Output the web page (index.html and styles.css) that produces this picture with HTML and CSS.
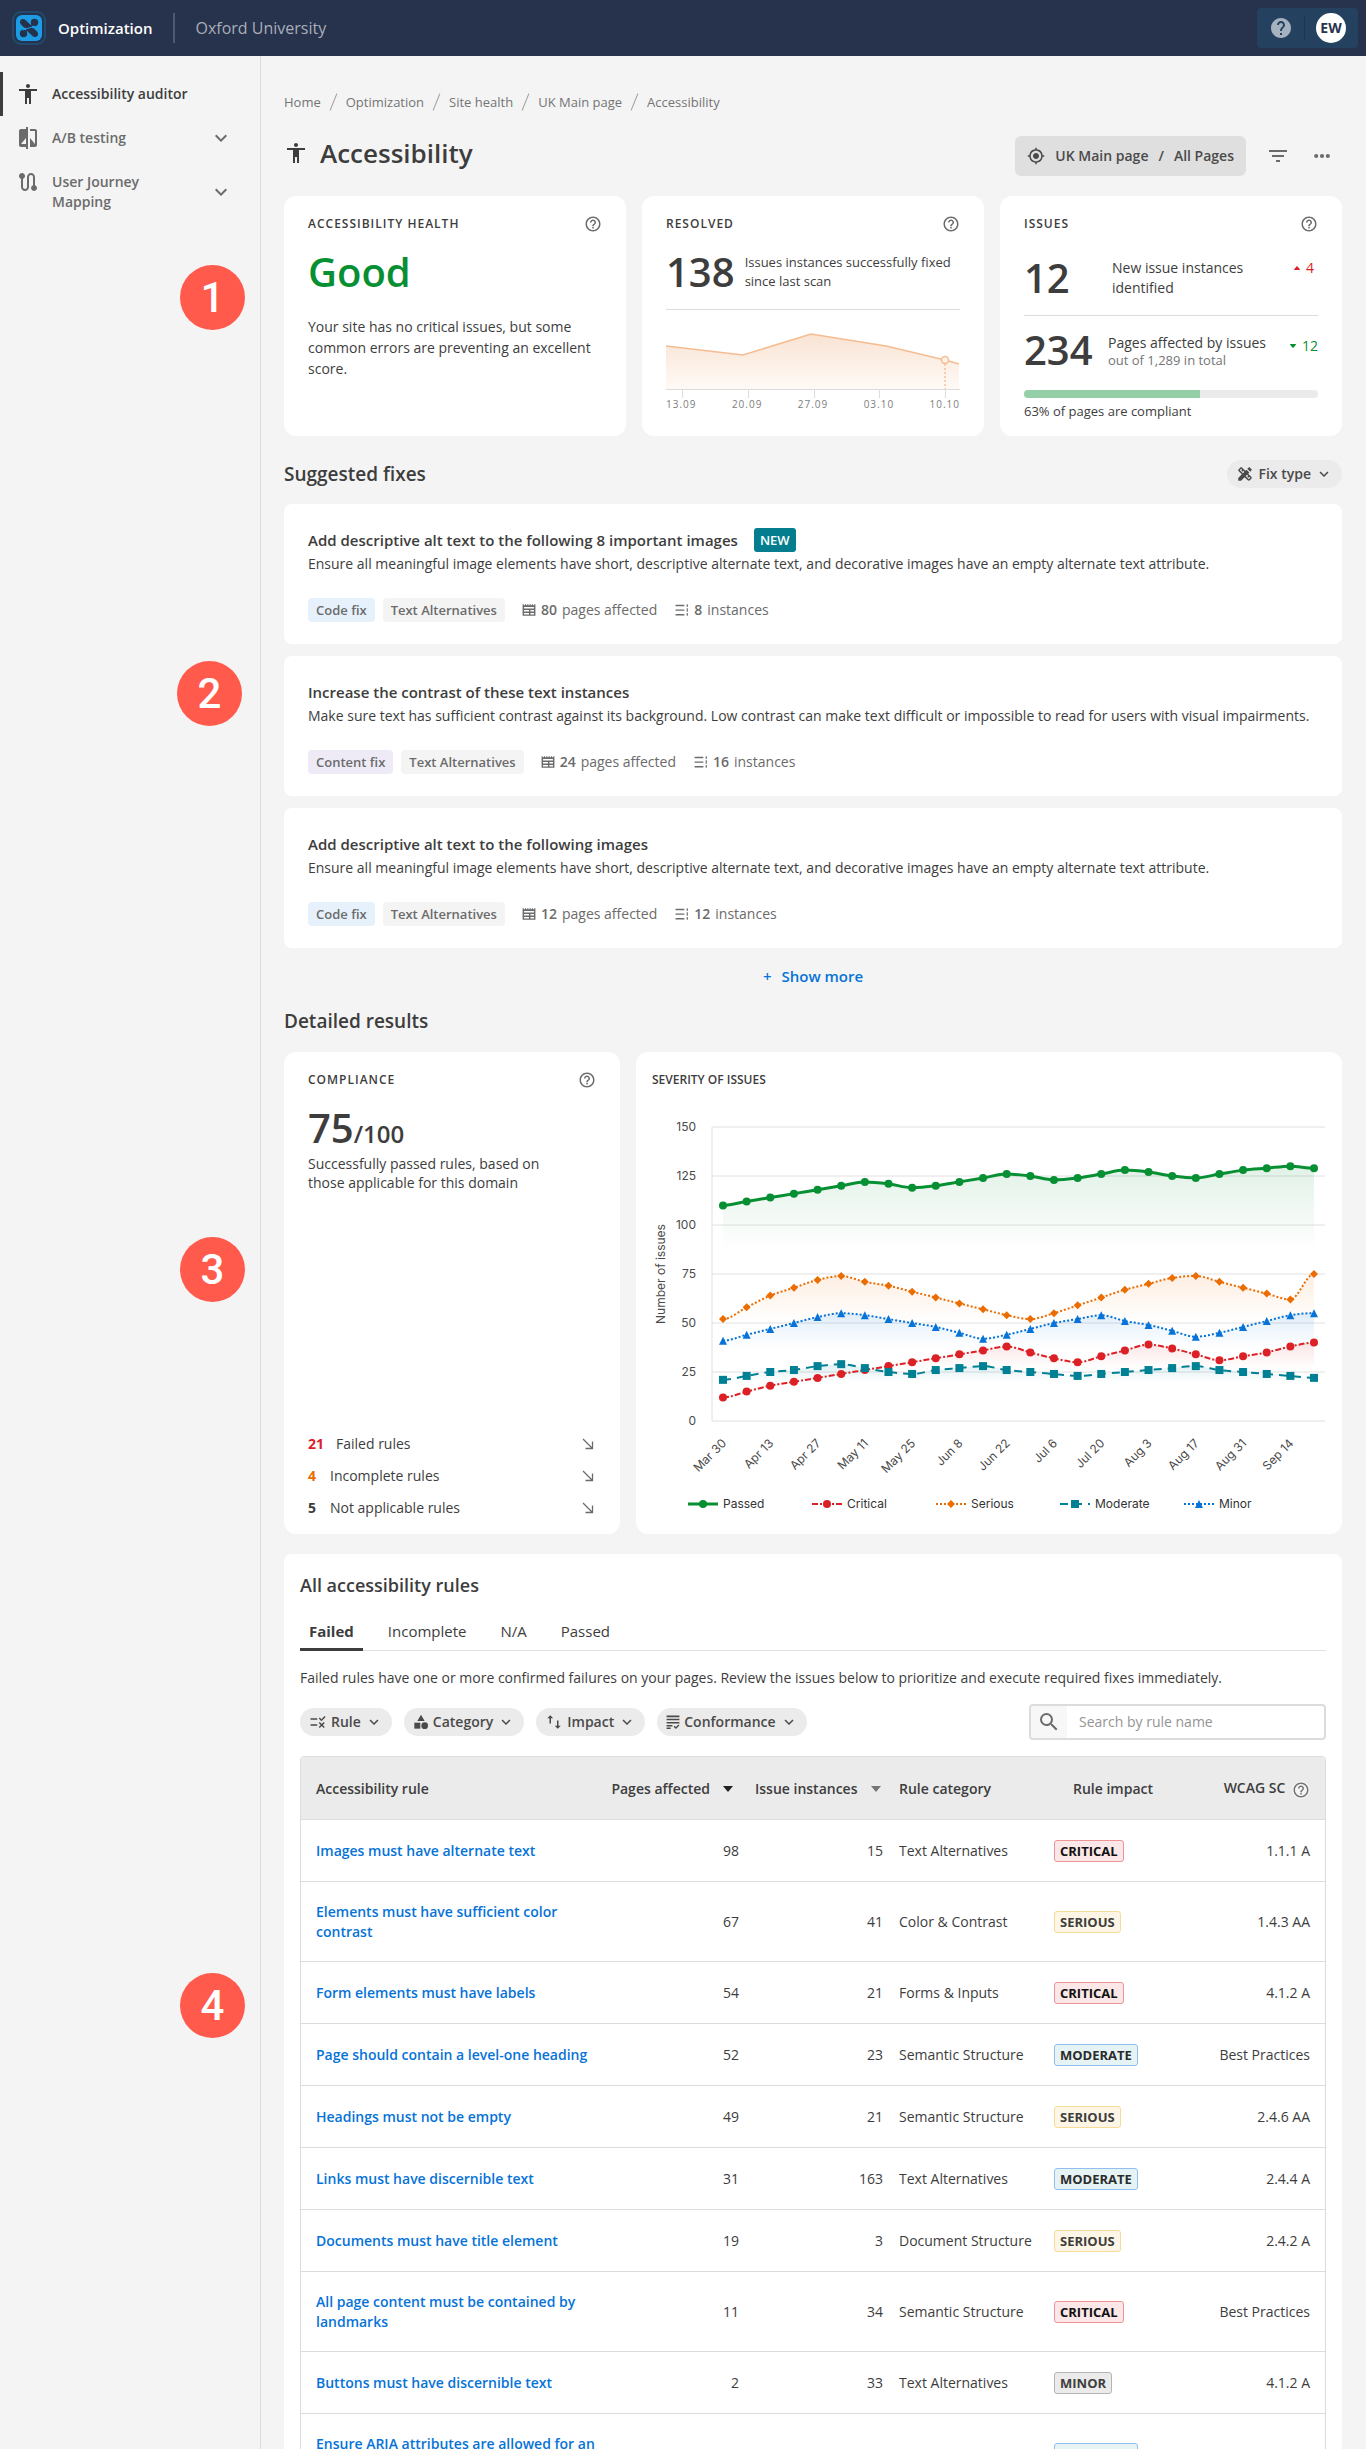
FILE: index.html
```html
<!DOCTYPE html>
<html lang="en">
<head>
  <meta charset="UTF-8" />
  <meta name="viewport" content="width=device-width, initial-scale=1.0"/>
  <title>Accessibility - Optimization</title>
  <link rel="stylesheet" href="styles.css">
</head>
<body>

  <!-- icon sprite -->
  <svg class="sprite" aria-hidden="true">
    <symbol id="i-person" viewBox="0 0 24 24"><path d="M12 2c1.1 0 2 .9 2 2s-.9 2-2 2-2-.9-2-2 .9-2 2-2zm9 7h-6v13h-2v-6h-2v6H9V9H3V7h18v2z"/></symbol>
    <symbol id="i-compare" viewBox="0 0 24 24"><path d="M10 3H5c-1.1 0-2 .9-2 2v14c0 1.1.9 2 2 2h5v2h2V1h-2v2zm0 15H5l5-6v6zm9-15h-5v2h5v13l-5-6v9h5c1.1 0 2-.9 2-2V5c0-1.1-.9-2-2-2z"/></symbol>
    <symbol id="i-route" viewBox="0 0 24 24"><path d="M19 15.18V7c0-2.21-1.79-4-4-4s-4 1.79-4 4v10c0 1.1-.9 2-2 2s-2-.9-2-2V8.82C8.16 8.4 9 7.3 9 6c0-1.66-1.34-3-3-3S3 4.34 3 6c0 1.3.84 2.4 2 2.82V17c0 2.21 1.79 4 4 4s4-1.79 4-4V7c0-1.1.9-2 2-2s2 .9 2 2v8.18A3 3 0 0 0 18 21c1.66 0 3-1.34 3-3 0-1.3-.84-2.4-2-2.82z"/></symbol>
    <symbol id="i-chevron" viewBox="0 0 24 24"><path d="M16.59 8.59L12 13.17 7.41 8.59 6 10l6 6 6-6z"/></symbol>
    <symbol id="i-help" viewBox="0 0 24 24"><path d="M11 18h2v-2h-2v2zm1-16C6.48 2 2 6.48 2 12s4.48 10 10 10 10-4.48 10-10S17.52 2 12 2zm0 18c-4.41 0-8-3.59-8-8s3.59-8 8-8 8 3.59 8 8-3.59 8-8 8zm0-14c-2.21 0-4 1.79-4 4h2c0-1.1.9-2 2-2s2 .9 2 2c0 2-3 1.75-3 5h2c0-2.25 3-2.5 3-5 0-2.21-1.79-4-4-4z"/></symbol>
    <symbol id="i-help-solid" viewBox="0 0 24 24"><path d="M12 2C6.48 2 2 6.48 2 12s4.48 10 10 10 10-4.48 10-10S17.52 2 12 2zm1 17h-2v-2h2v2zm2.07-7.75l-.9.92C13.45 12.9 13 13.5 13 15h-2v-.5c0-1.1.45-2.1 1.17-2.83l1.24-1.26c.37-.36.59-.86.59-1.41 0-1.1-.9-2-2-2s-2 .9-2 2H8c0-2.21 1.79-4 4-4s4 1.79 4 4c0 .88-.36 1.68-.93 2.25z"/></symbol>
    <symbol id="i-target" viewBox="0 0 24 24"><path d="M12 8c-2.21 0-4 1.79-4 4s1.79 4 4 4 4-1.79 4-4-1.79-4-4-4zm8.94 3A8.994 8.994 0 0 0 13 3.06V1h-2v2.06A8.994 8.994 0 0 0 3.06 11H1v2h2.06A8.994 8.994 0 0 0 11 20.94V23h2v-2.06A8.994 8.994 0 0 0 20.94 13H23v-2h-2.06zM12 19c-3.87 0-7-3.13-7-7s3.13-7 7-7 7 3.13 7 7-3.13 7-7 7z"/></symbol>
    <symbol id="i-filter" viewBox="0 0 24 24"><path d="M10 18h4v-2h-4v2zM3 6v2h18V6H3zm3 7h12v-2H6v2z"/></symbol>
    <symbol id="i-more" viewBox="0 0 24 24"><circle cx="5" cy="12" r="2.5"/><circle cx="12" cy="12" r="2.5"/><circle cx="19" cy="12" r="2.5"/></symbol>
    <symbol id="i-search" viewBox="0 0 24 24"><path d="M15.5 14h-.79l-.28-.27A6.471 6.471 0 0 0 16 9.5 6.5 6.5 0 1 0 9.5 16c1.61 0 3.09-.59 4.23-1.57l.27.28v.79l5 4.99L20.49 19l-4.99-5zm-6 0C7.01 14 5 11.99 5 9.5S7.01 5 9.5 5 14 7.01 14 9.5 11.99 14 9.5 14z"/></symbol>
    <symbol id="i-tools" viewBox="0 0 24 24"><path d="M16.24 11.51l1.57-1.57-3.75-3.75-1.57 1.57-4.14-4.13c-.78-.78-2.05-.78-2.83 0l-1.9 1.9c-.78.78-.78 2.05 0 2.83l4.13 4.13L3 17.25V21h3.75l4.76-4.76 4.13 4.13c.95.95 2.23.6 2.83 0l1.9-1.9c.78-.78.78-2.05 0-2.83l-4.13-4.13zm-7.06-.44L5.04 6.94l1.89-1.9L8.2 6.31 7.02 7.5l1.41 1.41 1.19-1.19 1.45 1.45-1.89 1.9zm7.88 7.89l-4.13-4.13 1.9-1.9 1.45 1.45-1.19 1.19 1.41 1.41 1.19-1.19 1.27 1.27-1.9 1.9zM20.71 7.04a.996.996 0 0 0 0-1.41l-2.34-2.34c-.47-.47-1.12-.29-1.41 0l-1.83 1.83 3.75 3.75 1.83-1.83z"/></symbol>
    <symbol id="i-rule" viewBox="0 0 24 24"><path d="M16.54 11L13 7.46l1.41-1.41 2.12 2.12 4.24-4.24 1.41 1.41L16.54 11zM11 7H2v2h9V7zm10 6.41L19.59 12 17 14.59 14.41 12 13 13.41 15.59 16 13 18.59 14.41 20 17 17.41 19.59 20 21 18.59 18.41 16 21 13.41zM11 15H2v2h9v-2z"/></symbol>
    <symbol id="i-category" viewBox="0 0 24 24"><path d="M12 1l5.5 9.5h-11z"/><circle cx="17.5" cy="17.5" r="5"/><path d="M2 13h9v9H2z"/></symbol>
    <symbol id="i-impact" viewBox="0 0 24 24"><path d="M7 3L3 7h3v7h2V7h3zM16 10v7h-3l4 4 4-4h-3v-7z"/></symbol>
    <symbol id="i-conform" viewBox="0 0 24 24"><path d="M1 1h22v2.800H1zM1 6.400h22v2.800H1zM1 11.800h22v2.800H1zM1 17h10v2.500H1zM1 21.500h7V24H1zM13 20l1.700-1.700 2.300 2.300 4.300-4.300L23 18l-6 6z"/></symbol>
    <symbol id="i-pages" viewBox="0 0 24 24"><path d="M1 2h2v2h2V2h2v2h2V2h2v2h2V2h2v2h2V2h2v2h2V2h2v20H1zM3.500 7v2.500h17V7zM3.500 12v2.500H12V12zm0 5v2.500H12V17zM14.500 12v2.500h6V12zm0 5v2.500h6V17z" fill-rule="evenodd"/></symbol>
    <symbol id="i-list" viewBox="0 0 24 24"><path d="M1 3h15v2.400H1zM1 11h15v2.400H1zM1 19h15v2.400H1zM20 2h2v5h-2zM20 9h2v6h-2zM20 17h2v5h-2z"/></symbol>
    <symbol id="i-arrow" viewBox="0 0 12 12"><path d="M1 1l9.500 9.500M10.500 3.500v7h-7" fill="none" stroke="currentColor" stroke-width="1.300"/></symbol>
  </svg>

  <div class="app">
    <header class="topbar">
      <svg class="logo" viewBox="0 0 34 34">
        <rect x="1" y="1" width="32" height="32" rx="8" fill="#24334f" stroke="#234a6b" stroke-width="2"/>
        <rect x="4" y="4" width="26" height="26" rx="6" fill="#1d9ce6"/>
        <g fill="#26324c">
          <circle cx="11" cy="11" r="3"/><circle cx="23" cy="23" r="3"/>
          <circle cx="22.500" cy="11.500" r="3.700"/><circle cx="11.500" cy="22.500" r="3.700"/>
          <path d="M9 13.500l4.500-4.500 7 6.500q-4 3-8.500 1zM25 20.500L20.500 25l-7-6.500q4-3 8.500-1zM14 17l6-3.500v3.500l-6 3.500z"/>
        </g>
        <path d="M11 19l6-2 6-2" fill="none" stroke="#1d9ce6" stroke-width="1"/>
      </svg>
      <strong class="product">Optimization</strong>
      <span class="org">Oxford University</span>
      <div class="account">
        <button class="icon-btn" aria-label="Help"><svg class="icon-24"><use href="#i-help-solid"/></svg></button>
        <i></i>
        <button class="avatar">EW</button>
      </div>
    </header>

    <div class="shell">
      <nav class="sidebar">
        <a href="#" class="nav-item active"><svg class="icon-24"><use href="#i-person"/></svg><span>Accessibility auditor</span></a>
        <a href="#" class="nav-item"><svg class="icon-24"><use href="#i-compare"/></svg><span>A/B testing</span><svg class="icon-24 chev"><use href="#i-chevron"/></svg></a>
        <a href="#" class="nav-item"><svg class="icon-24"><use href="#i-route"/></svg><span class="narrow">User Journey Mapping</span><svg class="icon-24 chev"><use href="#i-chevron"/></svg></a>
      </nav>

      <main class="main">
        <nav class="crumbs" aria-label="Breadcrumb">
          <a href="#">Home</a><i></i><a href="#">Optimization</a><i></i><a href="#">Site health</a><i></i><a href="#">UK Main page</a><i></i><a href="#">Accessibility</a>
        </nav>

        <div class="title-row">
          <h1><svg class="icon-24"><use href="#i-person"/></svg>Accessibility</h1>
          <div class="actions">
            <button class="scope"><svg class="icon-18"><use href="#i-target"/></svg><span>UK Main page</span><span>/</span><span>All Pages</span></button>
            <button class="icon-btn" aria-label="Filter"><svg class="icon-24"><use href="#i-filter"/></svg></button>
            <button class="icon-btn" aria-label="More"><svg class="icon-20"><use href="#i-more"/></svg></button>
          </div>
        </div>

        <div class="cards">
          <section class="card">
            <header><h3>Accessibility health</h3><button class="icon-btn" aria-label="About health"><svg class="icon-18"><use href="#i-help"/></svg></button></header>
            <p class="big good">Good</p>
            <p class="health-text">Your site has no critical issues, but some common errors are preventing an excellent score.</p>
          </section>

          <section class="card">
            <header><h3>Resolved</h3><button class="icon-btn" aria-label="About resolved"><svg class="icon-18"><use href="#i-help"/></svg></button></header>
            <div class="stat">
              <span class="big">138</span>
              <p>Issues instances successfully fixed since last scan</p>
            </div>
            <svg class="spark" viewBox="0 0 294 68">
              <defs><linearGradient id="sparkFill" x1="0" y1="0" x2="0" y2="1"><stop offset="0" stop-color="#f9e3d3"/><stop offset="1" stop-color="#fffaf6"/></linearGradient></defs>
              <path d="M0 16L77 25 145 4 220 16 279 30 293 34V59H0z" fill="url(#sparkFill)"/>
              <path d="M0 16L77 25 145 4 220 16 279 30 293 34" fill="none" stroke="#f5bc90" stroke-width="1.500"/>
              <path d="M279 34v25" stroke="#f0a878" stroke-dasharray="2 2"/>
              <circle cx="279" cy="30" r="3.500" fill="#fff3e8" stroke="#f5bc90" stroke-width="1.500"/>
              <path d="M0 59.500h294M16.500 60v8M82.500 60v8M148.500 60v8M213.500 60v8M279.500 60v8" stroke="#dcdcdc" fill="none"/>
            </svg>
            <div class="spark-labels"><span>13.09</span><span>20.09</span><span>27.09</span><span>03.10</span><span>10.10</span></div>
          </section>

          <section class="card">
            <header><h3>Issues</h3><button class="icon-btn" aria-label="About issues"><svg class="icon-18"><use href="#i-help"/></svg></button></header>
            <div class="issue first">
              <span class="big">12</span>
              <p>New issue instances identified</p>
              <span class="delta up"><svg viewBox="0 0 6 4"><path d="M0 4q0-1 3-4 3 3 3 4z"/></svg>4</span>
            </div>
            <div class="issue">
              <span class="big">234</span>
              <p>Pages affected by issues<small>out of 1,289 in total</small></p>
              <span class="delta down"><svg viewBox="0 0 6 4"><path d="M0 0h6q0 1-3 4-3-3-3-4z"/></svg>12</span>
            </div>
            <div class="bar"><div class="bar-fill" style="width: 60%"></div></div>
            <p class="bar-text">63% of pages are compliant</p>
          </section>
        </div>

        <div class="section-head">
          <h2>Suggested fixes</h2>
          <button class="pill"><svg class="icon-18"><use href="#i-tools"/></svg>Fix type<svg class="icon-18"><use href="#i-chevron"/></svg></button>
        </div>

        <div class="fixes">
          <article class="fix">
            <h4>Add descriptive alt text to the following 8 important images <span class="new">NEW</span></h4>
            <p>Ensure all meaningful image elements have short, descriptive alternate text, and decorative images have an empty alternate text attribute.</p>
            <div class="meta">
              <span class="tag code">Code fix</span><span class="tag">Text Alternatives</span>
              <span class="count"><svg class="icon-14"><use href="#i-pages"/></svg><b>80</b> pages affected</span>
              <span class="count"><svg class="icon-14"><use href="#i-list"/></svg><b>8</b> instances</span>
            </div>
          </article>
          <article class="fix">
            <h4>Increase the contrast of these text instances</h4>
            <p>Make sure text has sufficient contrast against its background. Low contrast can make text difficult or impossible to read for users with visual impairments.</p>
            <div class="meta">
              <span class="tag content">Content fix</span><span class="tag">Text Alternatives</span>
              <span class="count"><svg class="icon-14"><use href="#i-pages"/></svg><b>24</b> pages affected</span>
              <span class="count"><svg class="icon-14"><use href="#i-list"/></svg><b>16</b> instances</span>
            </div>
          </article>
          <article class="fix">
            <h4>Add descriptive alt text to the following images</h4>
            <p>Ensure all meaningful image elements have short, descriptive alternate text, and decorative images have an empty alternate text attribute.</p>
            <div class="meta">
              <span class="tag code">Code fix</span><span class="tag">Text Alternatives</span>
              <span class="count"><svg class="icon-14"><use href="#i-pages"/></svg><b>12</b> pages affected</span>
              <span class="count"><svg class="icon-14"><use href="#i-list"/></svg><b>12</b> instances</span>
            </div>
          </article>
        </div>
        <button class="show-more"><span>+</span>Show more</button>

        <div class="section-head results-head"><h2>Detailed results</h2></div>
        <div class="results">
          <section class="card compliance">
            <header><h3>Compliance</h3><button class="icon-btn" aria-label="About compliance"><svg class="icon-18"><use href="#i-help"/></svg></button></header>
            <p class="score"><span class="big">75</span>/100</p>
            <p class="score-text">Successfully passed rules, based on those applicable for this domain</p>
            <ul class="rule-counts">
              <li><a href="#"><b class="red">21</b>Failed rules<svg class="icon-12"><use href="#i-arrow"/></svg></a></li>
              <li><a href="#"><b class="orange">4</b>Incomplete rules<svg class="icon-12"><use href="#i-arrow"/></svg></a></li>
              <li><a href="#"><b>5</b>Not applicable rules<svg class="icon-12"><use href="#i-arrow"/></svg></a></li>
            </ul>
          </section>
          <section class="card severity">
            <header><h3>Severity of issues</h3></header>
            <svg id="chart" class="chart" viewBox="0 0 674 410" role="img" aria-label="Severity of issues over time"></svg>
          </section>
        </div>

        <section class="rules">
          <h2>All accessibility rules</h2>
          <div class="tabs" role="tablist">
            <button class="tab selected" role="tab">Failed</button>
            <button class="tab" role="tab">Incomplete</button>
            <button class="tab" role="tab">N/A</button>
            <button class="tab" role="tab">Passed</button>
          </div>
          <p class="rules-text">Failed rules have one or more confirmed failures on your pages. Review the issues below to prioritize and execute required fixes immediately.</p>
          <div class="toolbar">
            <button class="pill"><svg class="icon-18"><use href="#i-rule"/></svg>Rule<svg class="icon-18"><use href="#i-chevron"/></svg></button>
            <button class="pill"><svg class="icon-16"><use href="#i-category"/></svg>Category<svg class="icon-18"><use href="#i-chevron"/></svg></button>
            <button class="pill"><svg class="icon-18"><use href="#i-impact"/></svg>Impact<svg class="icon-18"><use href="#i-chevron"/></svg></button>
            <button class="pill"><svg class="icon-14"><use href="#i-conform"/></svg>Conformance<svg class="icon-18"><use href="#i-chevron"/></svg></button>
            <label class="search">
              <svg class="icon-24"><use href="#i-search"/></svg>
              <input type="search" placeholder="Search by rule name" aria-label="Search by rule name">
            </label>
          </div>

          <table class="table">
            <colgroup><col><col class="c-pages"><col class="c-issues"><col class="c-cat"><col class="c-impact"><col class="c-wcag"></colgroup>
            <thead>
              <tr>
                <th>Accessibility rule</th>
                <th class="num sorted">Pages affected<svg viewBox="0 0 10 6"><path d="M0 0h10L5 6z"/></svg></th>
                <th class="num">Issue instances<svg viewBox="0 0 10 6"><path d="M0 0h10L5 6z"/></svg></th>
                <th>Rule category</th>
                <th class="mid">Rule impact</th>
                <th class="num">WCAG SC <button class="icon-btn" aria-label="About WCAG success criteria"><svg class="icon-18"><use href="#i-help"/></svg></button></th>
              </tr>
            </thead>
            <tbody>
              <tr><td><a href="#">Images must have alternate text</a></td><td class="num">98</td><td class="num">15</td><td>Text Alternatives</td><td><span class="badge critical">CRITICAL</span></td><td class="num">1.1.1 A</td></tr>
              <tr><td><a href="#">Elements must have sufficient color contrast</a></td><td class="num">67</td><td class="num">41</td><td>Color &amp; Contrast</td><td><span class="badge serious">SERIOUS</span></td><td class="num">1.4.3 AA</td></tr>
              <tr><td><a href="#">Form elements must have labels</a></td><td class="num">54</td><td class="num">21</td><td>Forms &amp; Inputs</td><td><span class="badge critical">CRITICAL</span></td><td class="num">4.1.2 A</td></tr>
              <tr><td><a href="#">Page should contain a level-one heading</a></td><td class="num">52</td><td class="num">23</td><td>Semantic Structure</td><td><span class="badge moderate">MODERATE</span></td><td class="num">Best Practices</td></tr>
              <tr><td><a href="#">Headings must not be empty</a></td><td class="num">49</td><td class="num">21</td><td>Semantic Structure</td><td><span class="badge serious">SERIOUS</span></td><td class="num">2.4.6 AA</td></tr>
              <tr><td><a href="#">Links must have discernible text</a></td><td class="num">31</td><td class="num">163</td><td>Text Alternatives</td><td><span class="badge moderate">MODERATE</span></td><td class="num">2.4.4 A</td></tr>
              <tr><td><a href="#">Documents must have title element</a></td><td class="num">19</td><td class="num">3</td><td>Document Structure</td><td><span class="badge serious">SERIOUS</span></td><td class="num">2.4.2 A</td></tr>
              <tr><td><a href="#">All page content must be contained by landmarks</a></td><td class="num">11</td><td class="num">34</td><td>Semantic Structure</td><td><span class="badge critical">CRITICAL</span></td><td class="num">Best Practices</td></tr>
              <tr><td><a href="#">Buttons must have discernible text</a></td><td class="num">2</td><td class="num">33</td><td>Text Alternatives</td><td><span class="badge minor">MINOR</span></td><td class="num">4.1.2 A</td></tr>
              <tr><td><a href="#">Ensure ARIA attributes are allowed for an element's role</a></td><td class="num">2</td><td class="num">4</td><td>Semantic Structure</td><td><span class="badge moderate">MODERATE</span></td><td class="num">4.1.2 A</td></tr>
            </tbody>
          </table>
        </section>
      </main>
    </div>

    <!-- numbered callouts over the page -->
    <span class="pin pin-1">1</span>
    <span class="pin pin-2">2</span>
    <span class="pin pin-3">3</span>
    <span class="pin pin-4">4</span>
  </div>

  <script src="chart.js"></script>
</body>
</html>
```
FILE: chart.js
```js
const series = [
  { name: 'Passed', color: '#078f33', mark: 'circle', width: 3, dash: '', data: [110,112,114,116,118,120,122,121,119,120,122,124,126,125,123,124,126,128,127,125,124,126,128,129,130,129] },
  { name: 'Critical', color: '#dc2126', mark: 'circle', width: 2, dash: '6 2 2 2', data: [12,15,18,20,22,24,26,28,30,32,34,36,38,35,32,30,33,36,39,37,34,31,33,35,38,40] },
  { name: 'Serious', color: '#eb6c00', mark: 'diamond', width: 2, dash: '2 2', data: [52,58,64,68,72,74,71,69,66,63,60,57,54,52,55,59,63,67,70,73,74,71,68,65,62,75] },
  { name: 'Moderate', color: '#008094', mark: 'square', width: 2, dash: '8 6', data: [21,23,25,26,28,29,27,25,24,26,27,28,26,25,24,23,24,25,26,27,28,26,25,24,23,22] },
  { name: 'Minor', color: '#0673d8', mark: 'triangle', width: 2, dash: '2 2', data: [41,44,47,50,53,55,54,52,50,48,45,42,44,47,50,52,54,51,49,46,43,45,48,51,54,55] }
];
const labels = ['Mar 30','Apr 13','Apr 27','May 11','May 25','Jun 8','Jun 22','Jul 6','Jul 20','Aug 3','Aug 17','Aug 31','Sep 14'];

const plot = { left: 60, right: 673, top: 28, bottom: 322 };
const px = i => 71 + i * 591 / 25;
const py = v => plot.bottom - v * (plot.bottom - plot.top) / 150;

function marker(kind, x, y, color) {
  const shapes = {
    circle: `<circle cx="${x}" cy="${y}" r="4"/>`,
    diamond: `<path d="M${x} ${y - 4}l4 4-4 4-4-4z"/>`,
    square: `<rect x="${x - 4}" y="${y - 4}" width="8" height="8"/>`,
    triangle: `<path d="M${x} ${y - 4}l4 8h-8z"/>`
  };
  return `<g fill="${color}">${shapes[kind]}</g>`;
}

// smooth the line, keeping flat tangents at peaks
function curve(data) {
  const m = data.map((v, i) => {
    if (i === 0 || i === data.length - 1) return 0;
    const a = v - data[i - 1], b = data[i + 1] - v;
    return a * b <= 0 ? 0 : (a + b) / 2;
  });
  let d = `M${px(0)} ${py(data[0])}`;
  for (let i = 1; i < data.length; i++) {
    const x0 = px(i - 1), x1 = px(i), h = (x1 - x0) / 3;
    d += `C${x0 + h} ${py(data[i - 1] + m[i - 1] / 3)} ${x1 - h} ${py(data[i] - m[i] / 3)} ${x1} ${py(data[i])}`;
  }
  return d;
}

let out = '';
for (let v = 0; v <= 150; v += 25) {
  out += `<path class="grid" d="M${plot.left} ${py(v)}H${plot.right}"/>`;
  out += `<text class="tick" x="${plot.left - 16}" y="${py(v) + 4}" text-anchor="end">${v}</text>`;
}
out += `<path class="grid" d="M${plot.left} ${plot.top}V${plot.bottom}"/>`;
out += `<text class="axis-title" transform="translate(13 175) rotate(-90)" text-anchor="middle">Number of issues</text>`;
labels.forEach((t, i) => {
  out += `<text class="tick" transform="translate(${px(i * 2) + 4} 345) rotate(-45)" text-anchor="end">${t}</text>`;
});

series.forEach((s, i) => {
  const max = Math.max(...s.data);
  const d = curve(s.data);
  out += `<linearGradient id="fill${i}" gradientUnits="userSpaceOnUse" x1="0" x2="0" y1="${py(max)}" y2="${py(max * .67)}">
    <stop offset="0" stop-color="${s.color}" stop-opacity=".12"/><stop offset="1" stop-color="${s.color}" stop-opacity="0"/></linearGradient>`;
  out += `<path d="${d}V${plot.bottom}H${px(0)}z" fill="url(#fill${i})"/>`;
});
series.forEach((s, i) => {
  out += `<path d="${curve(s.data)}" fill="none" stroke="${s.color}" stroke-width="${s.width}" stroke-dasharray="${s.dash}"/>`;
  out += s.data.map((v, n) => marker(s.mark, px(n), py(v), s.color)).join('');

  const x = 36 + i * 124;
  out += `<path d="M${x} 405h30" stroke="${s.color}" stroke-width="${s.width}" stroke-dasharray="${s.dash}"/>`;
  out += marker(s.mark, x + 15, 405, s.color);
  out += `<text class="legend" x="${x + 35}" y="409">${s.name}</text>`;
});
document.getElementById('chart').innerHTML = out;
```
FILE: styles.css
```css
* { box-sizing: border-box; }

body {
  margin: 0;
  font-family: 'Open Sans', 'Noto Sans', sans-serif;
  font-size: 14px;
  line-height: 20px;
  color: #3d3d3d;
  background: #f4f4f4;
}

h1, h2, h3, h4, p, ul { margin: 0; padding: 0; font-weight: 400; }
a { color: inherit; text-decoration: none; }
button { font: inherit; color: inherit; border: none; background: none; padding: 0; cursor: pointer; }
svg { flex: none; fill: currentColor; display: block; }

.sprite { position: absolute; width: 0; height: 0; }
.icon-12 { width: 12px; height: 12px; }
.icon-14 { width: 14px; height: 14px; }
.icon-16 { width: 16px; height: 16px; }
.icon-18 { width: 18px; height: 18px; }
.icon-20 { width: 20px; height: 20px; }
.icon-24 { width: 24px; height: 24px; }
.icon-btn { display: inline-flex; color: #6b6b6b; }

.app {
  position: relative;
  height: 100vh;
  overflow: hidden;
  display: flex;
  flex-direction: column;
}

/* top bar */
.topbar {
  flex: none;
  height: 56px;
  padding: 0 8px 0 12px;
  display: flex;
  align-items: center;
  background: #27324c;
  color: #fff;
  font-size: 16px;
}
.logo { width: 34px; height: 34px; margin-right: 12px; }
.product { font-size: 15px; font-weight: 600; }
.org {
  margin-left: 21px;
  padding-left: 20px;
  border-left: 2px solid #4f5970;
  line-height: 30px;
  color: #a9aeba;
}
.account {
  margin-left: auto;
  height: 40px;
  padding: 5px 12px;
  display: flex;
  align-items: center;
  gap: 11px;
  background: #24425f;
  border-radius: 4px;
}
.account i { width: 1px; height: 24px; background: #27324c; }
.account .icon-btn { color: #a6b2bf; }
.avatar {
  width: 30px;
  height: 30px;
  border-radius: 50%;
  background: #fff;
  color: #27324c;
  font-size: 14px;
  font-weight: 700;
}

.shell { flex: 1; display: flex; min-height: 0; }

/* side navigation */
.sidebar {
  flex: none;
  width: 261px;
  padding-top: 16px;
  border-right: 1px solid #dcdcdc;
}
.nav-item {
  display: flex;
  align-items: center;
  gap: 12px;
  padding: 12px 27px 12px 13px;
  border-left: 3px solid transparent;
  color: #6b6b6b;
  font-weight: 600;
}
.nav-item svg { margin: -2px 0; }
.nav-item.active { border-left-color: #3d3d3d; color: #3d3d3d; }
.nav-item .chev { margin-left: auto; }
.nav-item .narrow { width: 110px; }
.nav-item:last-child svg:first-child { align-self: flex-start; }

.main { flex: 1; min-width: 0; padding: 36px 24px 0 23px; overflow: hidden; }

.crumbs { display: flex; align-items: center; font-size: 13px; color: #757575; }
.crumbs i { width: 1px; height: 18px; margin: 0 12px; background: #9b9b9b; transform: rotate(22deg); }

.title-row { display: flex; justify-content: space-between; align-items: flex-start; margin-top: 24px; }
h1 { display: flex; align-items: center; gap: 12px; font-size: 26px; line-height: 34px; font-weight: 600; }
.actions { display: flex; align-items: center; gap: 20px; padding-right: 8px; }
.actions .icon-btn { width: 24px; justify-content: center; }
.scope {
  height: 40px;
  padding: 0 12px;
  display: flex;
  align-items: center;
  gap: 10px;
  border-radius: 6px;
  background: #dfdfdf;
  color: #4a4a4a;
  font-weight: 600;
}

/* summary cards */
.cards { display: grid; grid-template-columns: repeat(3, 1fr); gap: 16px; margin-top: 20px; }
.card { background: #fff; border-radius: 12px; padding: 18px 24px 12px; }
.card header { display: flex; justify-content: space-between; align-items: center; height: 20px; }
.card h3 { font-size: 12px; font-weight: 600; letter-spacing: 1px; text-transform: uppercase; }
.big { font-size: 40px; line-height: 48px; font-weight: 600; }
.cards .card { height: 240px; }
.good { margin-top: 14px; color: #078f33; }
.health-text { margin-top: 20px; line-height: 21px; }

.stat { display: flex; align-items: center; gap: 10px; height: 76px; border-bottom: 1px solid #dcdcdc; }
.stat p { font-size: 13px; line-height: 19px; }
.spark { width: 100%; margin-top: 20px; }
.spark-labels { display: flex; justify-content: space-between; font-size: 10px; line-height: 12px; letter-spacing: 1px; color: #7d7d7d; }

.issue { display: grid; grid-template-columns: 84px 1fr auto; align-items: center; height: 64px; margin: 2px 0 8px; }
.issue.first { height: 76px; margin: 6px 0 0; grid-template-columns: 88px 1fr auto; border-bottom: 1px solid #dcdcdc; }
.issue p { line-height: 20px; }
.issue small { display: block; font-size: 13px; line-height: 14px; color: #757575; }
.delta { display: flex; align-items: center; gap: 6px; align-self: start; margin-top: 18px; }
.delta svg { width: 6px; height: 4px; }
.up { color: #dc2126; padding-right: 4px; }
.down { color: #078f33; }
.bar { height: 8px; border-radius: 4px; background: #ebebeb; overflow: hidden; }
.bar-fill { height: 8px; background: #94cfa8; }
.bar-text { font-size: 13px; margin-top: 3px; }

/* suggested fixes */
.section-head { display: flex; justify-content: space-between; align-items: center; height: 28px; margin: 24px 0 16px; }
.section-head h2 { font-size: 19px; font-weight: 600; }
.pill {
  height: 28px;
  padding: 0 9px;
  display: flex;
  align-items: center;
  gap: 4px;
  border-radius: 14px;
  background: #ebebeb;
  color: #4a4a4a;
  font-weight: 600;
}
.fixes { display: grid; gap: 12px; }
.fix { height: 140px; padding: 24px; background: #fff; border-radius: 8px; }
.fix h4 { display: flex; align-items: center; gap: 16px; height: 24px; font-size: 15px; font-weight: 600; }
.fix p { line-height: 24px; }
.new { padding: 0 6px; border-radius: 3px; background: #047e8e; color: #fff; font-size: 13px; line-height: 24px; font-weight: 600; }
.meta { display: flex; align-items: center; margin-top: 22px; color: #6b6b6b; }
.tag { height: 24px; margin-right: 8px; padding: 0 8px; border-radius: 4px; background: #f4f4f4; font-size: 13px; line-height: 24px; font-weight: 600; }
.code { background: #e6f1fb; }
.content { background: #eeebf7; }
.count { display: flex; align-items: center; gap: 5px; margin: 0 9px; }
.count b { font-weight: 600; }
.show-more { display: flex; gap: 10px; margin: 18px auto 0; font-size: 15px; font-weight: 600; color: #0673d8; }

/* detailed results */
.results-head { margin-top: 21px; margin-bottom: 17px; }
.results { display: grid; grid-template-columns: 336px 1fr; gap: 16px; }
.compliance { display: flex; flex-direction: column; height: 482px; padding-bottom: 10px; }
.score { margin-top: 18px; font-size: 24px; line-height: 40px; font-weight: 600; }
.score .big { line-height: 40px; }
.score-text { max-width: 240px; line-height: 19px; }
.rule-counts { margin-top: auto; list-style: none; }
.rule-counts a { display: flex; align-items: center; height: 32px; }
.rule-counts b { min-width: 10px; margin-right: 12px; font-weight: 700; }
.rule-counts svg { margin-left: auto; margin-right: 2px; color: #6b6b6b; }
.red { color: #dc2126; }
.orange { color: #eb6c00; }
.severity { padding-left: 16px; padding-right: 16px; }
.severity h3 { letter-spacing: 0; }
.chart { width: 100%; margin-top: 9px; overflow: visible; font-family: Inter, 'Liberation Sans', sans-serif; }
.grid { stroke: #e0e0e0; fill: none; }
.tick, .axis-title, .legend { font-size: 12px; fill: #4a4a4a; }
.legend { fill: #333; }

/* rules table */
.rules { margin-top: 20px; padding: 16px; background: #fff; border-radius: 8px; }
.rules h2 { font-size: 18px; line-height: 30px; font-weight: 600; }
.tabs { display: flex; gap: 16px; margin-top: 14px; border-bottom: 1px solid #e0e0e0; }
.tab { padding: 0 9px; height: 37px; font-size: 15px; margin-bottom: -1px; border-bottom: 3px solid transparent; }
.selected { font-weight: 700; border-bottom-color: #3d3d3d; }
.rules-text { margin-top: 17px; }
.toolbar { display: flex; align-items: center; gap: 12px; margin: 16px 0; }
.search {
  width: 297px;
  height: 36px;
  margin-left: auto;
  display: flex;
  align-items: center;
  border: 2px solid #dcdcdc;
  border-radius: 4px;
  overflow: hidden;
}
.search svg { width: 36px; height: 32px; padding: 4px 6px; background: #f7f7f7; color: #6b6b6b; }
.search input { flex: 1; min-width: 0; border: none; outline: none; padding: 0 12px; font: inherit; background: none; }
.search input::placeholder { color: #949494; }

.table { width: 100%; table-layout: fixed; border-spacing: 0; border: 1px solid #dcdcdc; border-radius: 4px; overflow: hidden; }
.c-pages { width: 149px; }
.c-issues { width: 144px; }
.c-cat { width: 155px; }
.c-impact { width: 134px; }
.c-wcag { width: 145px; }
.table th, .table td { padding: 20px 8px 19px; height: 62px; border-bottom: 1px solid #dcdcdc; text-align: left; vertical-align: middle; }
.table th { height: 63px; background: #ebebeb; font-weight: 600; white-space: nowrap; }
.table th:first-child, .table td:first-child { padding-left: 15px; padding-right: 0; }
.table th:last-child, .table td:last-child { padding-right: 15px; }
.table th svg { display: inline-block; width: 10px; height: 6px; margin: 0 6px 2px 13px; color: #757575; }
.table th.sorted svg { color: #222; }
.table th .icon-btn { vertical-align: middle; border-radius: 50%; background: #f4f4f4; margin-left: 3px; }
.table th .icon-btn svg { width: 18px; height: 18px; margin: 0; }
.table .num { text-align: right; }
.table .mid { text-align: center; }
.table td a { color: #0673d8; font-weight: 600; }
.badge { display: inline-block; padding: 0 5px; border: 1px solid; border-radius: 3px; font-size: 13px; font-weight: 700; }
.critical { background: #fbe7e8; border-color: #ee9396; color: #111; }
.serious { background: #fdf6e6; border-color: #f6dc97; }
.moderate { background: #e5f3f5; border-color: #8fc0ee; color: #2b2b2b; }
.minor { background: #ebebeb; border-color: #b5b5b5; }

/* callouts */
.pin {
  position: absolute;
  left: 180px;
  width: 65px;
  height: 65px;
  border-radius: 50%;
  background: #ff5a4c;
  color: #fff;
  font-family: Roboto, sans-serif;
  font-size: 42px;
  line-height: 65px;
  font-weight: 500;
  text-align: center;
}
.pin-1 { top: 265px; }
.pin-2 { top: 661px; left: 177px; }
.pin-3 { top: 1237px; }
.pin-4 { top: 1973px; }
```
